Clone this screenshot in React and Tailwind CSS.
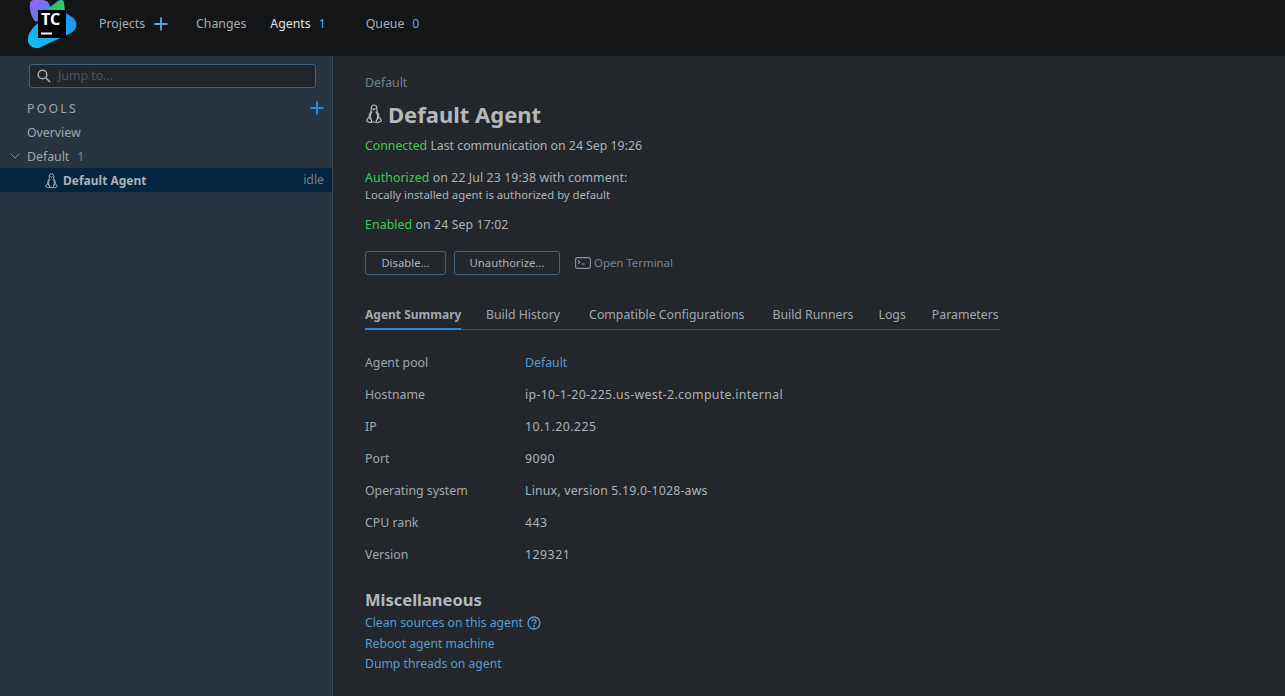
import React from "react";
import { Plus, ChevronDown } from "lucide-react";

function Penguin({ className }) {
  return (
    <svg viewBox="0 0 18 20" className={className} fill="none" stroke="currentColor" strokeWidth="1.2" strokeLinejoin="round" strokeLinecap="round">
      <path d="M5.500 15C3.500 12.500 4 10.500 5.500 8.500 6.500 7 6.200 5.500 6.200 4 6.200 2 7.500 1 9 1s2.800 1 2.800 3c0 1.500-.3 3 .7 4.500 1.500 2 2 4 0 6.500" />
      <path d="M7.800 4.600 9 5.800l1.200-1.200" />
      <path d="M7 8c-1.500 1.500-2 4-1.300 6.500M11 8c1.500 1.500 2 4 1.300 6.500" />
      <path d="M5.700 15c-.5-1-1.500-1.600-2.300-1.300-1 .3-.5 1.300-1.300 2-.7.6-.7 1.300.2 1.600 1.400.4 2.600 1.600 3.700 1.100.9-.4 1-2 -.3-3.400z" />
      <path d="M12.300 15c.5-1 1.500-1.600 2.300-1.300 1 .3.500 1.300 1.300 2 .7.600.7 1.300-.2 1.600-1.400.4-2.600 1.600-3.700 1.100-.9-.4-1-2 .3-3.400z" />
      <path d="M6.600 18h4.800" />
    </svg>
  );
}

function Logo() {
  return (
    <svg width="49" height="49" viewBox="0 0 49 49" className="block">
      <defs>
        <linearGradient id="tcBlue" x1="0" y1="1" x2="1" y2="0">
          <stop offset="0" stopColor="#19bdf0" />
          <stop offset="1" stopColor="#1593f5" />
        </linearGradient>
        <linearGradient id="tcPurple" x1="0" y1="0" x2="1" y2="1">
          <stop offset="0" stopColor="#9a62f0" />
          <stop offset="1" stopColor="#3a8ff0" />
        </linearGradient>
        <linearGradient id="tcGreen" x1="0" y1="0" x2="1" y2="1">
          <stop offset="0" stopColor="#1fa88a" />
          <stop offset="1" stopColor="#3ddc5f" />
        </linearGradient>
      </defs>
      <path d="M3 1C5-1 16-1 20 2l4 8-16 12C3 18 0 6 3 1z" fill="url(#tcPurple)" />
      <path d="M18 10 30 1c3-2 6-1 6 2l1 9-17 4z" fill="url(#tcGreen)" />
      <path d="M0 39c-1 6 5 10 11 9l32-15c7-4 7-12 1-16L32 9 9 24C4 28 0 34 0 39z" fill="url(#tcBlue)" />
      <rect x="10" y="10" width="28" height="28" fill="#000" />
      <text x="13" y="24.500" fill="#fff" fontSize="16" fontWeight="700" fontFamily="'Noto Sans', sans-serif">TC</text>
      <rect x="13" y="32.500" width="11" height="2" fill="#fff" />
    </svg>
  );
}

function Field({ label, children, valueClass }) {
  return (
    <div className="flex h-8 items-center">
      <div className="w-40 text-[#a1a7ad]">{label}</div>
      <div className={valueClass}>{children}</div>
    </div>
  );
}

export default function App() {
  return (
    <div className="flex h-[696px] flex-col overflow-hidden bg-[#23272c] font-['Noto_Sans',sans-serif] text-[12.3px] text-[#adb2b7]">
      {/* Header */}
      <header className="flex h-14 shrink-0 items-center bg-[#131517] pb-[8px]">
        <div className="ml-7 w-[71px] self-start"><Logo /></div>
        <span className="text-[#a9aeb3]">Projects</span>
        <Plus className="ml-[6px] h-5 w-5 text-[#5aa7f0]" strokeWidth={2.2} />
        <span className="ml-[25px] text-[#a9aeb3]">Changes</span>
        <span className="ml-[24px] text-[#e3e5e7]">Agents</span>
        <span className="ml-[8px] text-[#5aa7f0]">1</span>
        <span className="ml-[40px] text-[#a9aeb3]">Queue</span>
        <span className="ml-[8px] text-[#5aa7f0]">0</span>
      </header>

      <div className="flex min-h-0 flex-1">
        {/* Sidebar */}
        <aside className="w-[333px] shrink-0 border-r border-[#3b4650] bg-[#28343f]">
          <div className="ml-[29px] mt-2 flex h-6 w-[287px] items-center rounded-[3px] border border-[#44637e] bg-[#22262b] pl-[7px]">
            <svg viewBox="0 0 14 14" className="h-[14px] w-[14px] text-[#a7adb3]" fill="none" stroke="currentColor" strokeWidth="1.500">
              <circle cx="5.500" cy="5.500" r="4.300" />
              <path d="M8.800 8.800 13.200 13.200" />
            </svg>
            <span className="ml-[7px] text-[#4c555e]">Jump to...</span>
          </div>
          <div className="mt-2 flex h-6 items-center justify-between pl-[27px] pr-[5px]">
            <span className="pt-[2px] tracking-[2.2px] text-[#a1a7ad]">POOLS</span>
            <Plus className="h-5 w-5 text-[#1f8df0]" strokeWidth={2.2} />
          </div>
          <div className="flex h-6 items-center pl-[27px] pt-[2px] text-[#a1a7ad]">Overview</div>
          <div className="flex h-6 items-center pl-[7px] text-[#a1a7ad]">
            <ChevronDown className="mr-1 h-4 w-4 text-[#7d868e]" strokeWidth={1.5} />
            <span className="pt-[2px]">Default</span>
            <span className="ml-[8px] pt-[2px] text-[#78828b]">1</span>
          </div>
          <div className="flex h-6 items-center bg-[#04243f] pl-[44px] pr-[8px] pt-px">
            <Penguin className="h-4 w-[15px] text-[#b5babf]" />
            <span className="ml-[4px] text-[12px] font-bold text-[#adb2b7]">Default Agent</span>
            <span className="ml-auto text-[#78828b]">idle</span>
          </div>
        </aside>

        {/* Main */}
        <main className="min-w-0 flex-1 pl-[32px]">
          <div className="mt-[19px] leading-4 text-[#78828b]">Default</div>
          <h1 className="mt-[9px] flex h-[28px] items-center text-[22px] font-bold leading-7 text-[#b5b8bb]">
            <Penguin className="mr-[5px] h-[20px] w-[18px] text-[#b5babf]" />
            Default Agent
          </h1>
          <p className="mt-[8px] leading-5"><span className="text-[#3ccb5a]">Connected</span> Last communication on 24 Sep 19:26</p>
          <p className="mt-3 leading-5 tracking-[0.1px]"><span className="text-[#3ccb5a]">Authorized</span> on 22 Jul 23 19:38 with comment:</p>
          <p className="-mt-px text-[11.3px] leading-[16px]">Locally installed agent is authorized by default</p>
          <p className="mt-[12px] leading-5 tracking-[0.1px]"><span className="text-[#3ccb5a]">Enabled</span> on 24 Sep 17:02</p>

          <div className="mt-[16px] flex items-center">
            <button className="h-6 w-[81px] rounded-[3px] border border-[#44637e] text-[11.3px] text-[#adb2b7]">Disable...</button>
            <button className="ml-[8px] h-6 w-[106px] rounded-[3px] border border-[#44637e] text-[11.3px] text-[#adb2b7]">Unauthorize...</button>
            <svg viewBox="0 0 16 12" className="ml-[15px] h-3 w-4 text-[#8a98a5]" fill="none" stroke="currentColor" strokeWidth="1.100">
              <rect x="0.600" y="0.600" width="14.800" height="10.800" rx="1.800" />
              <path d="M3 3.500 5 5.200 3 6.900M6.500 7h3" />
            </svg>
            <span className="ml-[3px] text-[11.4px] text-[#78828b]">Open Terminal</span>
          </div>

          <nav className="mt-[25px] flex h-[30px] w-[635px] items-start whitespace-nowrap border-b border-[#454c53] leading-[29px] text-[#a1a7ad]">
            <span className="-mb-px h-[30px] w-[96px] border-b-2 border-[#1f8df0] text-[12px] font-bold">Agent Summary</span>
            <span className="ml-[25px]">Build History</span>
            <span className="ml-[29px]">Compatible Configurations</span>
            <span className="ml-[28px]">Build Runners</span>
            <span className="ml-[25px]">Logs</span>
            <span className="ml-[26px]">Parameters</span>
          </nav>

          <div className="mt-[17px]">
            <Field label="Agent pool" valueClass="text-[#5a9bd0]">Default</Field>
            <Field label="Hostname" valueClass="tracking-[0.33px]">ip-10-1-20-225.us-west-2.compute.internal</Field>
            <Field label="IP" valueClass="tracking-[0.5px]">10.1.20.225</Field>
            <Field label="Port" valueClass="tracking-[0.5px]">9090</Field>
            <Field label="Operating system" valueClass="tracking-[0.2px]">Linux, version 5.19.0-1028-aws</Field>
            <Field label="CPU rank" valueClass="tracking-[0.5px]">443</Field>
            <Field label="Version" valueClass="tracking-[0.5px]">129321</Field>
          </div>

          <h2 className="mt-[16px] text-[16.5px] font-bold leading-[25px] text-[#b5b8bb]">Miscellaneous</h2>
          <div className="text-[12.2px] text-[#5a9bd0]">
            <div className="flex h-[22px] items-center">
              Clean sources on this agent
              <svg viewBox="0 0 14 14" className="ml-[4px] h-[14px] w-[14px]" fill="none" stroke="currentColor" strokeWidth="1.300">
                <circle cx="7" cy="7" r="6" />
                <path d="M5 5.500c0-1.200 1-1.900 2-1.900s2 .7 2 1.800c0 1.500-2 1.500-2 3" />
                <circle cx="7" cy="10.300" r=".4" />
              </svg>
            </div>
            <div className="flex h-5 items-center">Reboot agent machine</div>
            <div className="flex h-5 items-center">Dump threads on agent</div>
          </div>
        </main>
      </div>
    </div>
  );
}
